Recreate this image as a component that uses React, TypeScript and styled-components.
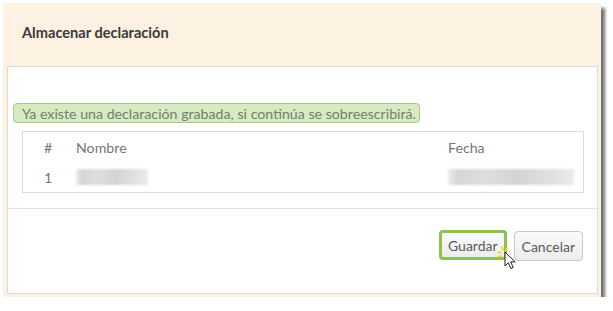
import React from "react";
import styled, { createGlobalStyle } from "styled-components";

const GlobalStyle = createGlobalStyle`
  html, body {
    margin: 0;
    padding: 0;
    background: #ffffff;
  }
  body {
    font-family: Lato, "Open Sans", "Liberation Sans", sans-serif;
    color: #555;
  }
`;

const Frame = styled.div`
  position: relative;
  margin: 3px 0 0 3px;
  width: 598px;
  height: 294px;
  background: #fdf1e2;
  box-shadow: 4px 5px 3px rgba(40, 40, 40, 0.65);
  display: flex;
  flex-direction: column;
`;

const Header = styled.div`
  height: 63px;
  box-sizing: border-box;
  padding: 0 0 5px 19px;
  display: flex;
  align-items: center;
  font-size: 14.6px;
  font-weight: 700;
  color: #3a3a3a;
`;

const Panel = styled.div`
  flex: 1;
  margin: 0 3px 3px 4px;
  background: #fff;
  border: 1px solid #dcdcdc;
  display: flex;
  flex-direction: column;
`;

const Body = styled.div`
  padding: 36px 13px 15px 5px;
  display: flex;
  flex-direction: column;
  gap: 8px;
  border-bottom: 1px solid #e2e2e2;
`;

const Notice = styled.div`
  align-self: flex-start;
  width: 407px;
  box-sizing: border-box;
  height: 20px;
  display: flex;
  align-items: center;
  padding-left: 8px;
  background: #d7eac2;
  border: 1px solid #a9c98a;
  border-radius: 4px;
  font-size: 14.2px;
  color: #74806a;
  white-space: nowrap;
`;

const Table = styled.div`
  margin-left: 9px;
  border: 1px solid #dcdcdc;
  height: 62px;
  box-sizing: border-box;
  display: grid;
  grid-template-columns: 53px 372px 1fr;
  grid-template-rows: 30px 30px;
  align-items: center;
  font-size: 14.2px;
  color: #777;
`;

const Cell = styled.div<{ $pad?: number }>`
  padding-left: ${p => p.$pad ?? 0}px;
  display: flex;
  align-items: center;
`;

const Blur = styled.div<{ $w: number }>`
  width: ${p => p.$w}px;
  height: 16px;
  background: linear-gradient(
    90deg,
    #ececec 0%,
    #d6d6d6 8%,
    #dedede 30%,
    #d4d4d4 55%,
    #e0e0e0 80%,
    #ebebeb 100%
  );
  filter: blur(1px);
`;

const Footer = styled.div`
  flex: 1;
  display: flex;
  justify-content: flex-end;
  align-items: flex-start;
  gap: 7px;
  padding: 21px 14px 0 0;
`;

const Button = styled.button<{ $active?: boolean }>`
  position: relative;
  height: 30px;
  box-sizing: border-box;
  padding: 0 ${p => (p.$active ? 6 : 7)}px;
  font-family: inherit;
  font-size: 14px;
  color: #5a5a5a;
  background: linear-gradient(#fbfbfb, #ececec);
  border: ${p => (p.$active ? "3px solid #8cc350" : "1px solid #c9c9c9")};
  border-radius: 4px;
  margin-top: ${p => (p.$active ? 0 : 1)}px;
`;

const Pointer = styled.svg`
  position: absolute;
  left: 55px;
  top: 13px;
  pointer-events: none;
`;

const Cursor = () => (
  <Pointer width="24" height="26" viewBox="0 0 24 26">
    <g stroke="#f2d21b" strokeWidth="1.6" strokeLinecap="round">
      <line x1="5" y1="1" x2="6" y2="4" />
      <line x1="1" y1="6" x2="4" y2="7" />
      <line x1="1" y1="11" x2="4" y2="10" />
      <line x1="10" y1="2" x2="8.5" y2="4.5" />
    </g>
    <path
      d="M8 6 L8 20 L11.3 16.8 L13.8 22.5 L16.2 21.4 L13.7 15.9 L18.2 15.9 Z"
      fill="#fff"
      stroke="#222"
      strokeWidth="1"
      strokeLinejoin="round"
    />
  </Pointer>
);

export default function App() {
  return (
    <>
      <GlobalStyle />
      <Frame>
        <Header>Almacenar declaración</Header>
        <Panel>
          <Body>
            <Notice>Ya existe una declaración grabada, si continúa se sobreescribirá.</Notice>
            <Table>
              <Cell $pad={21}>#</Cell>
              <Cell>Nombre</Cell>
              <Cell>Fecha</Cell>
              <Cell $pad={21}>1</Cell>
              <Cell>
                <Blur $w={72} />
              </Cell>
              <Cell>
                <Blur $w={126} />
              </Cell>
            </Table>
          </Body>
          <Footer>
            <Button $active>
              Guardar
              <Cursor />
            </Button>
            <Button>Cancelar</Button>
          </Footer>
        </Panel>
      </Frame>
    </>
  );
}
